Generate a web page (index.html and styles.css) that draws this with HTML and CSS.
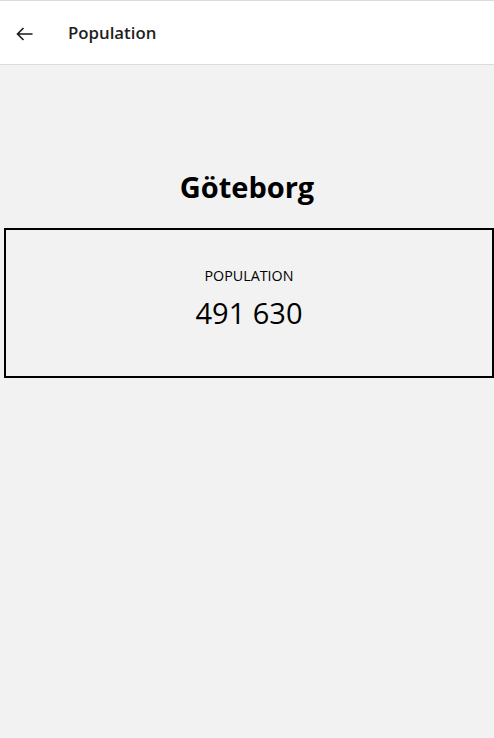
FILE: index.html
```html
<!DOCTYPE html>
<html lang="sv">
<head>
<meta charset="utf-8">
<title>Population</title>
<link rel="stylesheet" href="styles.css">
</head>
<body>
<header class="topbar">
  <button class="back" aria-label="Tillbaka">
    <svg width="17" height="14" viewBox="0 0 17 14" aria-hidden="true">
      <path d="M16.5 7H1.5M7.5 1L1.5 7l6 6" fill="none" stroke="#1a1a1a" stroke-width="1.6"/>
    </svg>
  </button>
  <span class="title">Population</span>
</header>
<main class="content">
  <h1 class="city">Göteborg</h1>
  <section class="card">
    <div class="label">POPULATION</div>
    <div class="value">491 630</div>
  </section>
</main>
</body>
</html>
```
FILE: styles.css
```css
html, body {
  margin: 0;
  padding: 0;
  height: 100%;
}
body {
  background: #f2f2f2;
  font-family: "Open Sans", "Noto Sans", sans-serif;
  color: #000;
}
.topbar {
  height: 63px;
  background: #fff;
  border-top: 1px solid #dcdcdc;
  border-bottom: 1px solid #dcdcdc;
  display: flex;
  align-items: center;
}
.back {
  width: 51px;
  height: 63px;
  padding: 3px 0 0 16px;
  border: 0;
  background: transparent;
  display: flex;
  align-items: center;
}
.back svg { display: block; }
.title {
  margin-left: 17px;
  font-size: 16.8px;
  font-weight: 600;
  color: #1e1e1e;
}
.content {
  padding-top: 100px;
}
.city {
  margin: 0;
  height: 44px;
  line-height: 44px;
  text-align: center;
  font-size: 29px;
  font-weight: 700;
}
.card {
  margin: 19px 0 0 4px;
  height: 150px;
  box-sizing: border-box;
  border: 2px solid #000;
  display: flex;
  flex-direction: column;
  align-items: center;
  padding-top: 36px;
}
.label {
  font-size: 14.3px;
  line-height: 20px;
}
.value {
  margin-top: 9px;
  font-size: 29px;
  line-height: 36px;
}
```
